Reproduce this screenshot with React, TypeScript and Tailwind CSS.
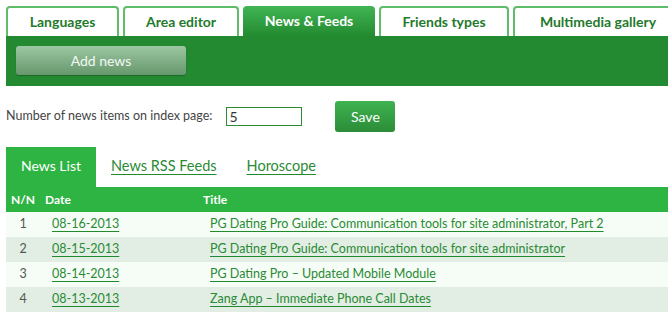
import React from "react";

const tabs = ["Languages", "Area editor", "News & Feeds", "Friends types", "Multimedia gallery"];

const tabWidths: Record<string, string> = {
	Languages: "w-[113px]",
	"Area editor": "w-[116px]",
	"News & Feeds": "w-[132px]",
	"Friends types": "w-[130px]",
	"Multimedia gallery": "w-[170px]",
};

const news = [
	{ n: 1, date: "08-16-2013", title: "PG Dating Pro Guide: Communication tools for site administrator, Part 2" },
	{ n: 2, date: "08-15-2013", title: "PG Dating Pro Guide: Communication tools for site administrator" },
	{ n: 3, date: "08-14-2013", title: "PG Dating Pro – Updated Mobile Module" },
	{ n: 4, date: "08-13-2013", title: "Zang App – Immediate Phone Call Dates" },
];

const App = () => {
	return (
		<div className="w-[668px] h-[315px] overflow-hidden bg-white font-['Lato',sans-serif] text-[#444]">
			<div className="pl-[6px] pt-[6px]">
				{/* Top tabs */}
				<div className="flex gap-[4px] h-[30px] whitespace-nowrap">
					{tabs.map((t) => {
						const active = t === "News & Feeds";
						return (
							<div
								key={t}
								className={`${tabWidths[t]} shrink-0 flex items-center justify-center pb-[1px] rounded-t-[4px] text-[14px] font-bold ${
									active
										? "bg-gradient-to-b from-[#41b554] to-[#238b30] text-white"
										: "bg-white border-2 border-b-0 border-[#5fbc68] text-[#1f7a2d]"
								}`}>
								{t}
							</div>
						);
					})}
				</div>

				{/* Green action bar */}
				<div className="h-[50px] bg-[#238a31] pl-[10px] pt-[10px]">
					<button className="w-[170px] h-[29px] rounded-[3px] bg-gradient-to-b from-[#9cc7a2] to-[#67976d] text-[14px] text-[#f2f7f2] shadow-[0_1px_1px_rgba(0,0,0,0.25)]">
						Add news
					</button>
				</div>
			</div>

			{/* Settings row */}
			<div className="flex items-center h-[31px] mt-[15px] pl-[6px] text-[12.5px]">
				<span>Number of news items on index page:</span>
				<input
					defaultValue="5"
					className="ml-[14px] w-[76px] h-[19px] border border-[#2a8a35] px-[2px] text-[14px] text-[#333] outline-none"
				/>
				<button className="ml-[33px] w-[60px] h-[31px] rounded-[3px] bg-gradient-to-b from-[#3eb250] to-[#2b8d37] text-white text-[14px]">
					Save
				</button>
			</div>

			{/* Sub tabs */}
			<div className="flex items-center h-[40px] mt-[15px] ml-[6px] pb-[3px] text-[14.5px]">
				<div className="w-[90px] h-[40px] -mb-[3px] pb-[3px] flex items-center justify-center bg-[#2db443] text-white text-[14px]">
					News List
				</div>
				<a className="ml-[15px] underline decoration-[#1f8a2e] underline-offset-[3px] text-[#2a8a35]">News RSS Feeds</a>
				<a className="ml-[30px] underline decoration-[#1f8a2e] underline-offset-[3px] text-[#2a8a35]">Horoscope</a>
			</div>

			{/* News table */}
			<div className="ml-[6px]">
				<div className="grid grid-cols-[34px_158px_1fr] h-[25px] items-center bg-[#2db443] text-white text-[12px] font-bold">
					<div className="text-center">N/N</div>
					<div className="pl-[5px]">Date</div>
					<div className="pl-[5px]">Title</div>
				</div>
				{news.map((row, i) => (
					<div
						key={row.n}
						className={`grid grid-cols-[34px_158px_1fr] h-[25px] items-center text-[12.5px] ${
							i % 2 === 0 ? "bg-[#f6fdf6]" : "bg-[#e2eee4]"
						}`}>
						<div className="text-center text-[#555]">{row.n}</div>
						<div className="pl-[12px]">
							<a className="underline decoration-[#1f8a2e] underline-offset-[3px] text-[#2a8a35]">{row.date}</a>
						</div>
						<div className="pl-[12px] whitespace-nowrap">
							<a className="underline decoration-[#1f8a2e] underline-offset-[3px] text-[#2a8a35]">{row.title}</a>
						</div>
					</div>
				))}
			</div>
		</div>
	);
};

export default App;
